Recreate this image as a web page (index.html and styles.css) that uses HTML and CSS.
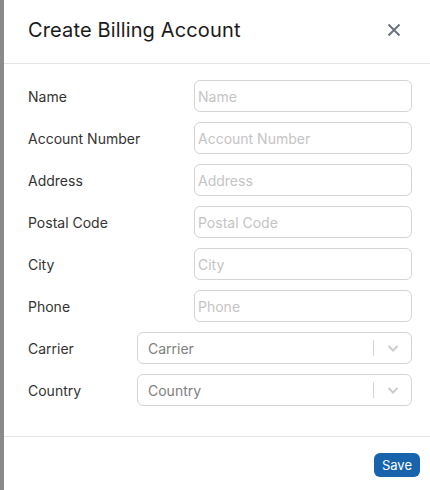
FILE: index.html
```html
<!DOCTYPE html>
<html>
<head>
<meta charset="utf-8">
<link rel="stylesheet" href="styles.css">
</head>
<body>
<div class="page">
  <div class="backdrop"></div>
  <div class="modal">
    <div class="header">
      <h1 class="title">Create Billing Account</h1>
      <button class="close" aria-label="Close">
        <svg width="14" height="14" viewBox="0 0 14 14"><path d="M1.5 1.5 L12.5 12.5 M12.5 1.5 L1.5 12.5" stroke="#6b7280" stroke-width="2" stroke-linecap="butt"/></svg>
      </button>
    </div>
    <div class="body">
      <div class="row"><label class="label">Name</label><input class="input" placeholder="Name"></div>
      <div class="row"><label class="label">Account Number</label><input class="input" placeholder="Account Number"></div>
      <div class="row"><label class="label">Address</label><input class="input" placeholder="Address"></div>
      <div class="row"><label class="label">Postal Code</label><input class="input" placeholder="Postal Code"></div>
      <div class="row"><label class="label">City</label><input class="input" placeholder="City"></div>
      <div class="row"><label class="label">Phone</label><input class="input" placeholder="Phone"></div>
      <div class="row row-select"><label class="label">Carrier</label>
        <div class="select"><span class="select-value">Carrier</span><span class="sep"></span><span class="chev"><svg width="14" height="14" viewBox="0 0 14 14"><path d="M2.5 5 L7 9.5 L11.5 5" fill="none" stroke="#cccccc" stroke-width="2"/></svg></span></div>
      </div>
      <div class="row row-select"><label class="label">Country</label>
        <div class="select"><span class="select-value">Country</span><span class="sep"></span><span class="chev"><svg width="14" height="14" viewBox="0 0 14 14"><path d="M2.5 5 L7 9.5 L11.5 5" fill="none" stroke="#cccccc" stroke-width="2"/></svg></span></div>
      </div>
    </div>
    <div class="footer">
      <button class="save">Save</button>
    </div>
  </div>
</div>
</body>
</html>
```
FILE: styles.css
```css
* { box-sizing: border-box; }
html, body { margin: 0; padding: 0; }
body {
  font-family: Inter, "Noto Sans", sans-serif;
  color: #333;
  background: #fff;
}
.page {
  display: flex;
  height: 490px;
  width: 430px;
}
.backdrop {
  width: 4px;
  background: #8a8a8a;
  flex: none;
}
.modal {
  flex: 1;
  display: flex;
  flex-direction: column;
  background: #fff;
}
.header {
  height: 64px;
  border-bottom: 1px solid #e5e5e5;
  display: flex;
  align-items: center;
  justify-content: space-between;
  padding: 0 29px 3px 24px;
}
.title {
  margin: 0;
  font-size: 20px;
  font-weight: 400;
  color: #1a1a1a;
  letter-spacing: 0.14px;
}
.close {
  border: 0;
  background: none;
  padding: 0;
  width: 14px;
  height: 14px;
  display: flex;
}
.body {
  padding: 16px 18px 30px 24px;
  display: flex;
  flex-direction: column;
  gap: 10px;
}
.row {
  display: grid;
  grid-template-columns: 166px 1fr;
  align-items: center;
  height: 32px;
}
.row-select {
  grid-template-columns: 109px 1fr;
}
.label {
  font-size: 14px;
  color: #333;
}
.input {
  height: 32px;
  width: 100%;
  border: 1px solid #d4d4d4;
  border-radius: 6px;
  padding: 0 3px;
  font-family: Inter, sans-serif;
  font-size: 14px;
  color: #333;
  outline: none;
}
.input::placeholder { color: #c4c4c4; }
.select {
  height: 32px;
  border: 1px solid #d4d4d4;
  border-radius: 6px;
  display: flex;
  align-items: center;
  padding-left: 10px;
}
.select-value {
  flex: 1;
  font-size: 14px;
  color: #808080;
}
.sep {
  width: 1px;
  height: 16px;
  background: #d4d4d4;
}
.chev {
  width: 37px;
  display: flex;
  justify-content: center;
  align-items: center;
}
.footer {
  border-top: 1px solid #e5e5e5;
  flex: 1;
  display: flex;
  justify-content: flex-end;
  align-items: flex-start;
  padding: 16px 10px 0 0;
}
.save {
  background: #1764ad;
  color: #fff;
  border: 0;
  border-radius: 6px;
  height: 24px;
  padding: 0 8px;
  font-family: Inter, sans-serif;
  font-size: 13px;
}
```
